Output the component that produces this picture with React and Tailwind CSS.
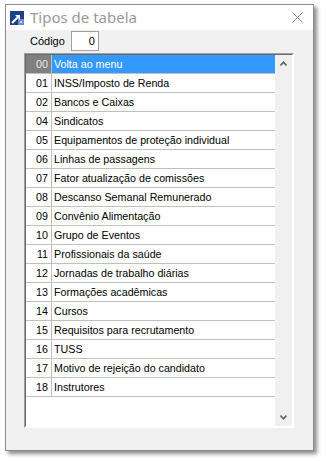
import React from "react";

const rows = [
  ["00", "Volta ao menu"],
  ["01", "INSS/Imposto de Renda"],
  ["02", "Bancos e Caixas"],
  ["04", "Sindicatos"],
  ["05", "Equipamentos de proteção individual"],
  ["06", "Linhas de passagens"],
  ["07", "Fator atualização de comissões"],
  ["08", "Descanso Semanal Remunerado"],
  ["09", "Convênio Alimentação"],
  ["10", "Grupo de Eventos"],
  ["11", "Profissionais da saúde"],
  ["12", "Jornadas de trabalho diárias"],
  ["13", "Formações acadêmicas"],
  ["14", "Cursos"],
  ["15", "Requisitos para recrutamento"],
  ["16", "TUSS"],
  ["17", "Motivo de rejeição do candidato"],
  ["18", "Instrutores"],
];

function AppIcon() {
  return (
    <svg width="14" height="14" viewBox="0 0 14 14">
      <rect x="0" y="0" width="14" height="14" fill="#1f3f8c" />
      <rect x="8" y="8" width="6" height="6" fill="#6f8fc8" />
      <rect x="10" y="10" width="2" height="2" fill="#c8d4ec" />
      <path d="M2 12 L9 5" stroke="#fff" strokeWidth="2" />
      <path d="M5 4 L10 4 L10 9 Z" fill="#fff" />
    </svg>
  );
}

function Chevron({ up }) {
  return (
    <svg width="7" height="5" viewBox="0 0 7 5">
      <path
        d={up ? "M0.5 4.5 L3.5 1.2 L6.5 4.5" : "M0.5 0.5 L3.5 3.8 L6.5 0.5"}
        stroke="#606060"
        strokeWidth="1.6"
        fill="none"
      />
    </svg>
  );
}

export default function App() {
  return (
    <div className="w-[326px] h-[461px] bg-white pt-[4px] pl-[5px]" style={{ fontFamily: "'Liberation Sans', Arial, sans-serif" }}>
      <div className="w-[309px] h-[447px] border border-[#8a8a8a] flex flex-col shadow-[3px_3px_4px_rgba(0,0,0,0.45)]">
        {/* title bar */}
        <div className="h-[25px] bg-white flex items-center">
          <div className="ml-[4px] mt-[1px]">
            <AppIcon />
          </div>
          <span className="ml-[6px] text-[15px] text-[#9a9a9a] leading-none" style={{ fontFamily: "'Noto Sans', 'Open Sans', sans-serif" }}>
            Tipos de tabela
          </span>
          <svg className="ml-auto mr-[10px]" width="11" height="11" viewBox="0 0 11 11">
            <path d="M0.5 0.5 L10.5 10.5 M10.5 0.5 L0.5 10.5" stroke="#8a8a8a" strokeWidth="1" />
          </svg>
        </div>

        {/* client */}
        <div className="flex-1 bg-[#f0f0f0] flex flex-col">
          <div className="flex items-center mt-[1px] pl-[24px] h-[20px]">
            <span className="text-[11px] text-black">Código</span>
            <div className="ml-[6px] w-[28px] h-[20px] bg-white border border-[#a0a0a0] flex items-center justify-end pr-[3px] text-[11px]">
              0
            </div>
          </div>

          <div className="ml-[18px] mt-[2px] w-[270px] h-[375px] border border-[#a0a0a0] border-r-white border-b-white">
            <div className="w-full h-full border border-[#696969] border-r-white border-b-white flex">
              <div className="flex-1 bg-white flex flex-col">
                {rows.map(([code, label], i) => (
                  <div key={code} className="flex h-[19px] shrink-0 border-b border-[#c0c0c0] text-[10.7px] leading-[18px]">
                    <div
                      className={
                        i === 0
                          ? "w-[26px] border-r border-[#c0c0c0] bg-[#808080] text-[#e8e8e8] text-right pr-[3px]"
                          : "w-[26px] border-r border-[#c0c0c0] text-black text-right pr-[3px]"
                      }
                    >
                      {code}
                    </div>
                    <div className={i === 0 ? "flex-1 bg-[#3399ff] text-white pl-[2px]" : "flex-1 text-black pl-[2px]"}>
                      {label}
                    </div>
                  </div>
                ))}
              </div>
              <div className="w-[17px] bg-[#f0f0f0] flex flex-col items-center justify-between pt-[6px] pb-[6px]">
                <Chevron up />
                <Chevron />
              </div>
            </div>
          </div>
        </div>
      </div>
    </div>
  );
}
